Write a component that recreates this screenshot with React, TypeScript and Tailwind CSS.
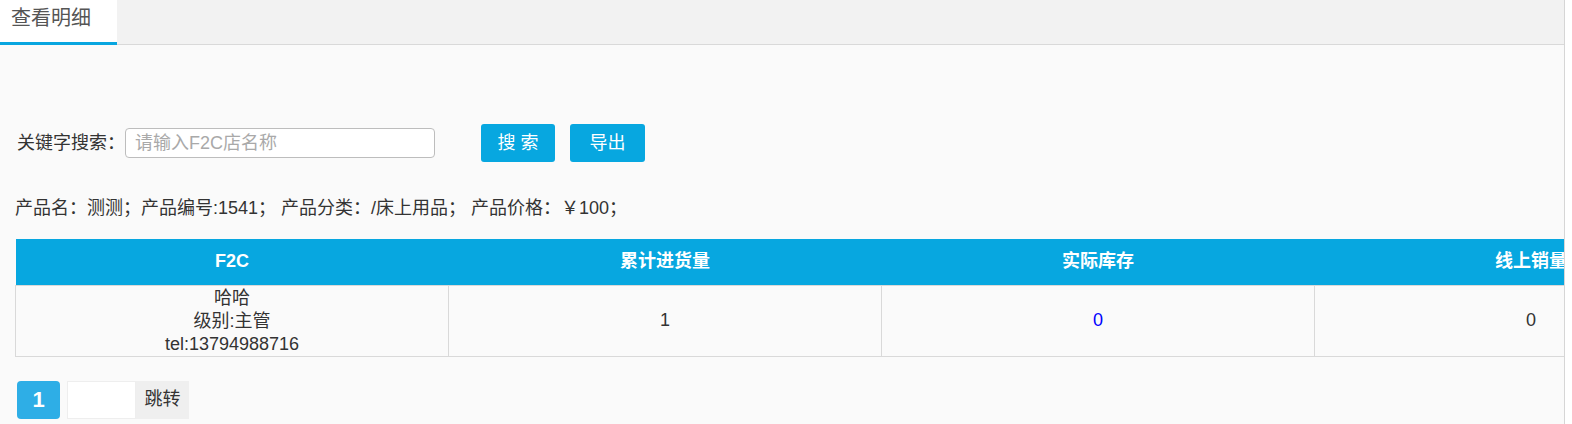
import React from "react";

const font = { fontFamily: '"Liberation Sans", Arial, "Noto Sans CJK SC", sans-serif' };

const columns = ["F2C", "累计进货量", "实际库存", "线上销量"];

const App: React.FC = () => {
  return (
    <div
      className="w-[1572px] h-[424px] bg-white overflow-hidden text-[#333] [text-spacing-trim:space-all]"
      style={font}
    >
      <div className="w-[1565px] h-full bg-[#fafafa] border-r border-[#d6d6d6] overflow-hidden">
        {/* tabs */}
        <div className="h-[45px] bg-[#f2f2f2] border-b border-[#d9d9d9] flex">
          <div className="w-[117px] h-[45px] bg-white border-b-[3px] border-[#08a6e0] pl-[11px] pt-[5px] text-[20px] leading-[26px] text-[#555]">
            查看明细
          </div>
        </div>

        <div className="pl-[15px]">
          {/* search */}
          <div className="flex items-center mt-[79px] h-[38px]">
            <span className="ml-[2px] text-[18px] text-[#333] whitespace-nowrap">关键字搜索：</span>
            <input
              className="w-[310px] h-[30px] rounded-[4px] border border-[#bdbdbd] bg-white px-[9px] text-[18px] outline-none placeholder:text-[#a9a9a9]"
              placeholder="请输入F2C店名称"
            />
            <button className="ml-[46px] w-[74px] h-[38px] rounded-[3px] bg-[#07a7e0] text-white text-[18px]">
              搜 索
            </button>
            <button className="ml-[15px] w-[75px] h-[38px] rounded-[3px] bg-[#07a7e0] text-white text-[18px]">
              导出
            </button>
          </div>

          {/* product info */}
          <div className="mt-[34px] text-[18px] leading-[24px] text-[#333] whitespace-nowrap">
            产品名：测测；产品编号:1541； 产品分类：/床上用品； 产品价格：￥100；
          </div>

          {/* table */}
          <table className="mt-[19px] border-collapse table-fixed w-[1732px]">
            <thead>
              <tr className="bg-[#07a7e0] h-[46px]">
                {columns.map((c) => (
                  <th key={c} className="w-[433px] text-white text-[18px] font-bold text-center p-0">
                    {c}
                  </th>
                ))}
              </tr>
            </thead>
            <tbody>
              <tr className="h-[70px]">
                <td className="border border-[#d9d9d9] text-center text-[18px] leading-[23px] p-0 pt-[1px]">
                  <div>哈哈</div>
                  <div>级别:主管</div>
                  <div>tel:13794988716</div>
                </td>
                <td className="border border-[#d9d9d9] text-center text-[18px] p-0">1</td>
                <td className="border border-[#d9d9d9] text-center text-[18px] text-[#0000ff] p-0">0</td>
                <td className="border border-[#d9d9d9] text-center text-[18px] p-0">0</td>
              </tr>
            </tbody>
          </table>

          {/* pagination */}
          <div className="flex items-center mt-[24px] ml-[2px]">
            <div className="w-[43px] h-[38px] rounded-[4px] bg-[#2eaee6] text-white text-[22px] font-bold flex items-center justify-center">
              1
            </div>
            <input className="ml-[7px] w-[69px] h-[38px] bg-white border border-[#eeeeee] outline-none" />
            <button className="w-[53px] h-[38px] bg-[#efefef] text-[18px] text-[#333]">跳转</button>
          </div>
        </div>
      </div>
    </div>
  );
};

export default App;
